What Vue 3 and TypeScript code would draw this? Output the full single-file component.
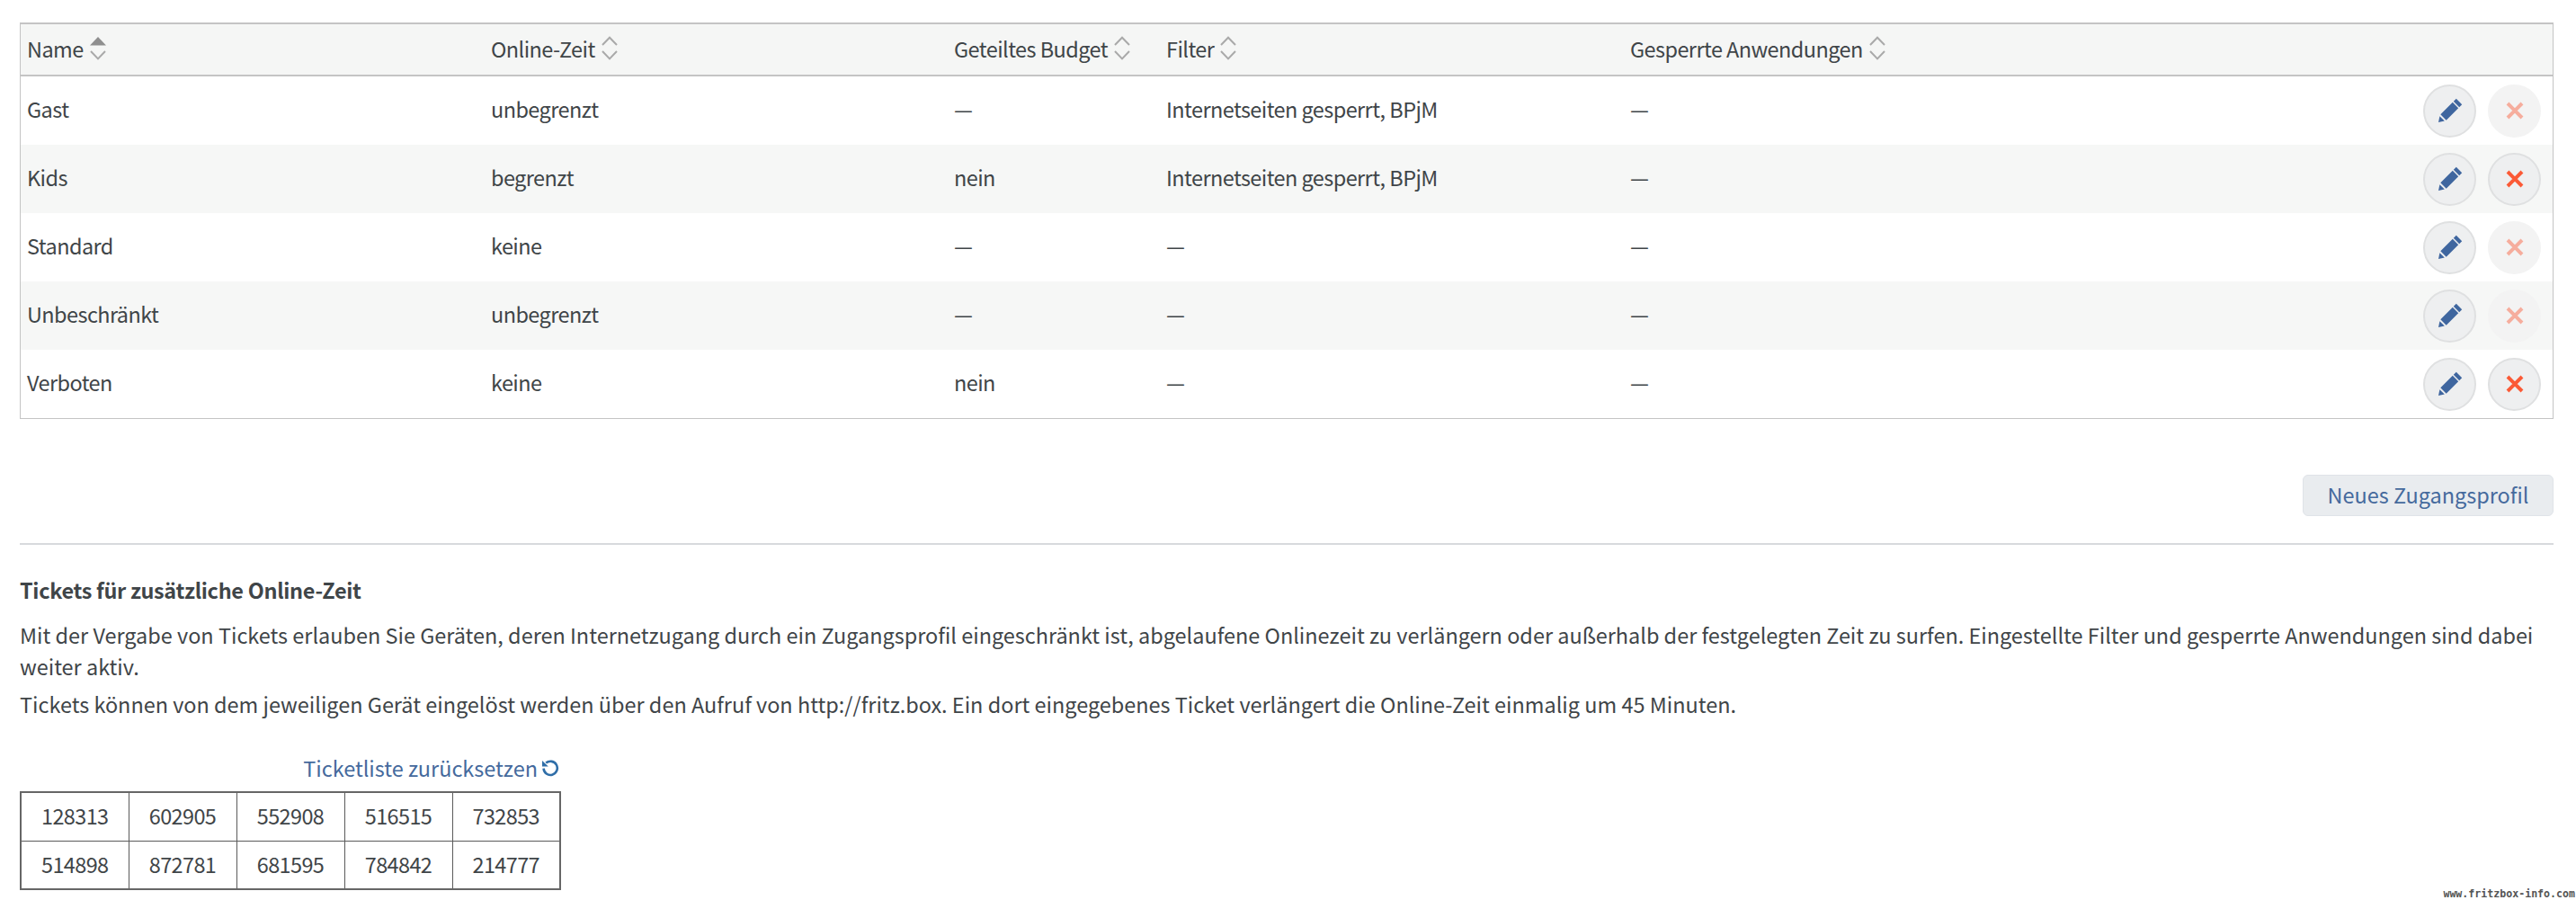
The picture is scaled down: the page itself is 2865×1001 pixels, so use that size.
<script setup lang="ts">
interface Profile { name: string; online: string; budget: string; filter: string; apps: string; deletable: boolean }
const columns = [
  { label: 'Name', active: true },
  { label: 'Online-Zeit', active: false },
  { label: 'Geteiltes Budget', active: false },
  { label: 'Filter', active: false },
  { label: 'Gesperrte Anwendungen', active: false },
]
const filterText = 'Internetseiten gesperrt, BPjM'
const profiles: Profile[] = [
  { name: 'Gast', online: 'unbegrenzt', budget: '—', filter: filterText, apps: '—', deletable: false },
  { name: 'Kids', online: 'begrenzt', budget: 'nein', filter: filterText, apps: '—', deletable: true },
  { name: 'Standard', online: 'keine', budget: '—', filter: '—', apps: '—', deletable: false },
  { name: 'Unbeschränkt', online: 'unbegrenzt', budget: '—', filter: '—', apps: '—', deletable: false },
  { name: 'Verboten', online: 'keine', budget: 'nein', filter: '—', apps: '—', deletable: true },
]
const tickets = [
  ['128313', '602905', '552908', '516515', '732853'],
  ['514898', '872781', '681595', '784842', '214777'],
]
</script>

<template>
  <div class="page">
    <table class="profiles">
      <colgroup>
        <col class="c1" /><col class="c2" /><col class="c3" /><col class="c4" /><col class="c5" /><col />
      </colgroup>
      <thead>
        <tr>
          <th v-for="c in columns" :key="c.label">
            <span class="th-inner">
              {{ c.label }}
              <svg class="sort" viewBox="0 0 20 28" width="20" height="28" aria-hidden="true">
                <path v-if="c.active" d="M1 10.5 10 1 19 10.5Z" fill="#8f8f8f" />
                <path v-else d="M2 10 10 1.8 18 10" fill="none" stroke="#a9a9a9" stroke-width="2" />
                <path d="M2 17 10 25.4 18 17" fill="none" stroke="#a9a9a9" stroke-width="2" />
              </svg>
            </span>
          </th>
          <th></th>
        </tr>
      </thead>
      <tbody>
        <tr v-for="p in profiles" :key="p.name">
          <td>{{ p.name }}</td>
          <td>{{ p.online }}</td>
          <td>{{ p.budget }}</td>
          <td>{{ p.filter }}</td>
          <td>{{ p.apps }}</td>
          <td class="actions">
            <div class="action-row">
              <button class="round" type="button" aria-label="Bearbeiten">
                <svg viewBox="0 0 28 28" width="28" height="28" aria-hidden="true">
                  <path d="M1 27 2.4 20.2 7.8 25.6Z" fill="#3f669f" />
                  <path d="M3.3 18.3 16.8 4.8 23.2 11.2 9.7 24.7Z" fill="#3f669f" />
                  <path d="M17.8 3.8 20.8.8 27.2 7.2 24.2 10.2Z" fill="#3f669f" />
                </svg>
              </button>
              <button class="round" :class="{ off: !p.deletable }" type="button" aria-label="Löschen">
                <svg viewBox="0 0 20 20" width="20" height="20" aria-hidden="true">
                  <path d="M2 2 18 18M18 2 2 18" stroke="#fb5a36" stroke-width="4" fill="none" />
                </svg>
              </button>
            </div>
          </td>
        </tr>
      </tbody>
    </table>

    <div class="btn-row">
      <button class="primary" type="button">Neues Zugangsprofil</button>
    </div>
    <hr class="rule" />

    <h2 class="title">Tickets für zusätzliche Online-Zeit</h2>
    <p class="text first">Mit der Vergabe von Tickets erlauben Sie Geräten, deren Internetzugang durch ein Zugangsprofil eingeschränkt ist, abgelaufene Onlinezeit zu verlängern oder außerhalb der festgelegten Zeit zu surfen. Eingestellte Filter und gesperrte Anwendungen sind dabei weiter aktiv.</p>
    <p class="text second">Tickets können von dem jeweiligen Gerät eingelöst werden über den Aufruf von http://fritz.box. Ein dort eingegebenes Ticket verlängert die Online-Zeit einmalig um 45 Minuten.</p>

    <div class="tickets">
      <a class="reset">
        Ticketliste zurücksetzen
        <svg viewBox="0 0 20 20" width="20" height="20" aria-hidden="true">
          <path d="M5.2 4.6A7.6 7.6 0 1 1 2.6 10.6" fill="none" stroke="#2f6ea8" stroke-width="2.6" />
          <path d="M1 2 1 8.6 7.8 8.6Z" fill="#2f6ea8" />
        </svg>
      </a>
      <table class="ticket-table">
        <tr v-for="(row, i) in tickets" :key="i">
          <td v-for="t in row" :key="t">{{ t }}</td>
        </tr>
      </table>
    </div>

    <div class="watermark">www.fritzbox-info.com</div>
  </div>
</template>

<style>
html, body { margin: 0; background: #fff; }
</style>

<style scoped>
.page {
  position: relative;
  box-sizing: border-box;
  width: 2865px;
  height: 1001px;
  padding: 25px 25px 0 22px;
  overflow: hidden;
  font-family: "Noto Sans CJK SC", "Noto Sans", sans-serif;
  font-size: 23.45px;
  color: #3f4548;
}
.profiles {
  width: 2818px;
  table-layout: fixed;
  border-collapse: separate;
  border-spacing: 0;
  border: 1px solid #c4c4c4;
  border-top-width: 2px;
  letter-spacing: -.55px;
}
.c1 { width: 516px; }
.c2 { width: 515px; }
.c3 { width: 236px; }
.c4 { width: 516px; }
.c5 { width: 800px; }
th {
  box-sizing: border-box;
  height: 58px;
  padding: 0 0 3px 7px;
  background: #f5f6f5;
  border-bottom: 2px solid #c4c4c4;
  font-weight: 400;
  text-align: left;
}
.th-inner { display: flex; align-items: center; gap: 6px; white-space: nowrap; }
td { box-sizing: border-box; height: 76px; padding: 0 0 5px 7px; }
tbody tr { height: 76px; }
tbody tr:nth-child(even) td { background: #f6f7f6; }
td.actions { padding: 0; }
.action-row { display: flex; justify-content: flex-end; gap: 13px; padding-right: 13px; }
.round {
  display: flex;
  align-items: center;
  justify-content: center;
  box-sizing: border-box;
  width: 59px;
  height: 59px;
  padding: 0;
  border: 2px solid #dfe0e1;
  border-radius: 50%;
  background: #eeeff0;
}
.round.off { background: #f3f3f3; border-color: #f3f3f3; }
.round.off svg { opacity: .45; }
.btn-row { display: flex; justify-content: flex-end; margin-top: 62px; }
.primary {
  box-sizing: border-box;
  width: 279px;
  height: 46px;
  padding: 0 0 3px;
  border: 1px solid #dfe3e8;
  border-radius: 6px;
  background: #e9ecef;
  color: #456a9d;
  font: inherit;
}
.rule { margin: 30px 0 0; border: 0; border-top: 2px solid #d8dadd; }
.title { margin: 32px 0 0; font-size: 23.45px; letter-spacing: -.3px; line-height: 36px; font-weight: 700; }
.text { margin: 0; line-height: 35px; }
.first { margin-top: 15px; }
.second { margin-top: 7px; }
.tickets { display: flex; flex-direction: column; align-items: flex-end; width: 602px; margin-top: 35px; }
.reset { display: flex; align-items: center; gap: 4px; height: 36px; color: #456a9d; padding-right: 2px; }
.ticket-table {
  width: 602px;
  margin-top: 8px;
  table-layout: fixed;
  border-collapse: collapse;
  border: 2px solid #666;
  letter-spacing: -.6px;
}
.ticket-table td {
  height: 54px;
  padding: 0 0 2px;
  border: 1px solid #5b5b5b;
  text-align: center;
  background: #fff;
}
.watermark {
  position: absolute;
  right: 1px;
  bottom: 0;
  font-family: "DejaVu Sans Mono", monospace;
  font-size: 11.6px;
  font-weight: 700;
  line-height: 14px;
  color: #555;
}
</style>
